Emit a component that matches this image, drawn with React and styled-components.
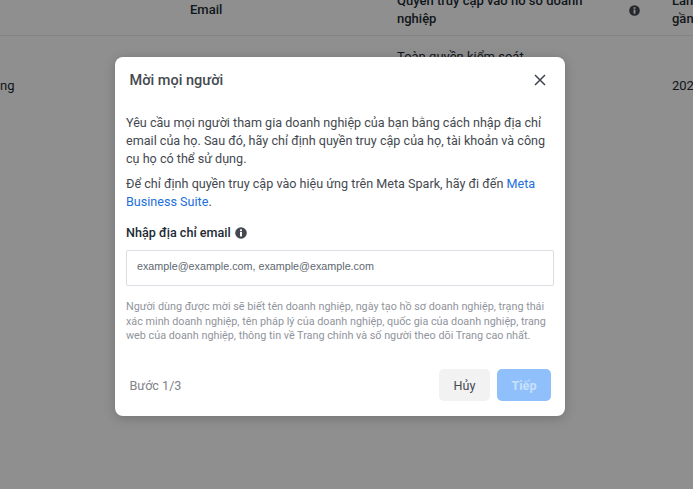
import React from "react";
import styled, { createGlobalStyle } from "styled-components";

const GlobalStyle = createGlobalStyle`
  html, body {
    margin: 0;
    padding: 0;
    height: 100%;
    overflow: hidden;
    background: #fff;
    font-family: Roboto, "Liberation Sans", sans-serif;
  }
`;

const Page = styled.div`
  position: relative;
  width: 693px;
  height: 489px;
  overflow: hidden;
`;

const Table = styled.div`
  margin-top: -17px;
  width: 693px;
  font-size: 13px;
  line-height: 18px;
  color: #1c2b33;
`;

const Row = styled.div`
  display: grid;
  grid-template-columns: 190px 207px 275px 100px;
  width: 772px;
  height: ${(p) => p.$height}px;
  align-items: center;
  border-bottom: ${(p) => (p.$header ? "1px solid #e9ebee" : "none")};
  background: #fff;
`;

const HeaderCell = styled.div`
  font-weight: 500;
  display: flex;
  align-items: center;
  justify-content: space-between;
  padding-top: 2px;
  padding-right: ${(p) => p.$pad || 0}px;
`;

const HeaderText = styled.span`
  width: 215px;
`;

const NameCell = styled.div`
  text-align: right;
  padding-right: 177px;
`;

const StackCell = styled.div`
  display: flex;
  flex-direction: column;
  align-self: start;
  padding-top: 12px;
`;

const Overlay = styled.div`
  position: absolute;
  inset: 0;
  background: rgba(0, 0, 0, 0.44);
`;

const Modal = styled.div`
  position: absolute;
  left: 115px;
  top: 57px;
  width: 450px;
  height: 359px;
  display: flex;
  flex-direction: column;
  background: #fff;
  border-radius: 8px;
  box-shadow: 0 2px 12px rgba(0, 0, 0, 0.2);
`;

const ModalHeader = styled.div`
  display: flex;
  align-items: center;
  justify-content: space-between;
  height: 46px;
  padding: 0 17px 0 14.5px;
  flex: none;
`;

const Title = styled.h2`
  margin: 0;
  font-size: 14.5px;
  font-weight: 500;
  color: #444950;
`;

const CloseButton = styled.button`
  display: flex;
  padding: 0;
  border: 0;
  background: none;
  color: #444950;
`;

const Body = styled.div`
  flex: 1;
  padding: 11px 11px 0;
`;

const Paragraph = styled.p`
  margin: 0 0 7px;
  font-size: 12.6px;
  line-height: 18px;
  color: #444950;
`;

const LinkText = styled.a`
  color: #216fdb;
`;

const FieldLabel = styled.div`
  display: flex;
  align-items: center;
  gap: 4px;
  margin-top: 13px;
  font-size: 12.6px;
  line-height: 18px;
  font-weight: 500;
  color: #1c2b33;
`;

const EmailInput = styled.div`
  box-sizing: border-box;
  height: 36px;
  margin-top: 8px;
  padding: 0 10px 5px;
  display: flex;
  align-items: center;
  font-family: "Liberation Sans", Arial, sans-serif;
  font-size: 10.75px;
  color: #606770;
  border: 1px solid #dadde1;
  border-radius: 2px;
`;

const Hint = styled.p`
  margin: 14px 0 0;
  font-size: 10.8px;
  line-height: 14.5px;
  color: #90949c;
`;

const Footer = styled.div`
  display: flex;
  align-items: center;
  justify-content: space-between;
  height: 32px;
  padding: 0 14px 0 14.5px;
  margin-bottom: 15px;
  flex: none;
`;

const StepText = styled.span`
  font-size: 12.6px;
  color: #7f8389;
`;

const Actions = styled.div`
  display: flex;
  gap: 7px;
`;

const Button = styled.button`
  width: ${(p) => p.$width}px;
  height: 32px;
  padding: 0;
  border: 0;
  border-radius: 5px;
  font-family: inherit;
  font-size: 12.6px;
  font-weight: ${(p) => (p.$primary ? 700 : 400)};
  color: ${(p) => (p.$primary ? "#c9e0fc" : "#444950")};
  background: ${(p) => (p.$primary ? "#90c0fb" : "#f2f2f2")};
`;

function InfoIcon({ size = 12, color = "#444950" }) {
  return (
    <svg width={size} height={size} viewBox="0 0 12 12">
      <circle cx="6" cy="6" r="5.8" fill={color} />
      <rect x="5" y="5" width="2" height="4.4" fill="#fff" />
      <rect x="5" y="2.4" width="2" height="1.8" fill="#fff" />
    </svg>
  );
}

export default function App() {
  return (
    <Page>
      <GlobalStyle />
      <Table>
        <Row $header $height={52}>
          <div />
          <HeaderCell>Email</HeaderCell>
          <HeaderCell $pad={32}>
            <HeaderText>Quyền truy cập vào hồ sơ doanh nghiệp</HeaderText>
            <InfoIcon size={11} color="#444950" />
          </HeaderCell>
          <HeaderCell>
            <HeaderText>Lần hoạt động gần nhất</HeaderText>
          </HeaderCell>
        </Row>
        <Row $height={100}>
          <NameCell>ng</NameCell>
          <div />
          <StackCell>Toàn quyền kiểm soát</StackCell>
          <div>2023</div>
        </Row>
      </Table>
      <Overlay />
      <Modal>
        <ModalHeader>
          <Title>Mời mọi người</Title>
          <CloseButton aria-label="Đóng">
            <svg width="16" height="16" viewBox="0 0 16 16" fill="none" stroke="currentColor" strokeWidth="1.6">
              <path d="M3 3l10 10M13 3L3 13" />
            </svg>
          </CloseButton>
        </ModalHeader>
        <Body>
          <Paragraph>
            Yêu cầu mọi người tham gia doanh nghiệp của bạn bằng cách nhập địa chỉ email của họ. Sau
            đó, hãy chỉ định quyền truy cập của họ, tài khoản và công cụ họ có thể sử dụng.
          </Paragraph>
          <Paragraph>
            Để chỉ định quyền truy cập vào hiệu ứng trên Meta Spark, hãy đi đến{" "}
            <LinkText>Meta Business Suite</LinkText>.
          </Paragraph>
          <FieldLabel>
            Nhập địa chỉ email
            <InfoIcon size={12} />
          </FieldLabel>
          <EmailInput>example@example.com, example@example.com</EmailInput>
          <Hint>
            Người dùng được mời sẽ biết tên doanh nghiệp, ngày tạo hồ sơ doanh nghiệp, trạng thái xác
            minh doanh nghiệp, tên pháp lý của doanh nghiệp, quốc gia của doanh nghiệp, trang web của
            doanh nghiệp, thông tin về Trang chính và số người theo dõi Trang cao nhất.
          </Hint>
        </Body>
        <Footer>
          <StepText>Bước 1/3</StepText>
          <Actions>
            <Button $width={51}>Hủy</Button>
            <Button $width={54} $primary>
              Tiếp
            </Button>
          </Actions>
        </Footer>
      </Modal>
    </Page>
  );
}
